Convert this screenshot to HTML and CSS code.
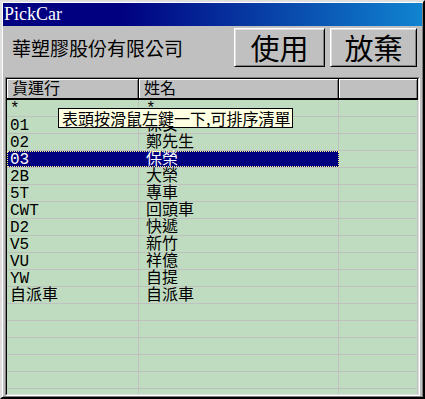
FILE: index.html
```html
<!DOCTYPE html>
<html lang="zh-Hant">
<head>
    <meta charset="UTF-8">
    <title>PickCar</title>
    <link rel="stylesheet" href="styles.css">
</head>
<body>
    <div class="window">
        <div class="titlebar">PickCar</div>
        <div class="toolbar">
            <span class="company">華塑膠股份有限公司</span>
            <div class="buttons">
                <button class="btn btn-use">使用</button>
                <button class="btn btn-cancel">放棄</button>
            </div>
        </div>
        <div class="grid">
            <div class="grid-frame">
                <div class="grid-head">
                    <div class="head-cell">貨運行</div>
                    <div class="head-cell">姓名</div>
                    <div class="head-cell"></div>
                </div>
                <div class="grid-body">
                    <div class="row"><div class="cell">*</div><div class="cell">*</div><div class="cell"></div></div>
                    <div class="row"><div class="cell">01</div><div class="cell">保安</div><div class="cell"></div></div>
                    <div class="row"><div class="cell">02</div><div class="cell">鄭先生</div><div class="cell"></div></div>
                    <div class="row selected"><div class="cell">03</div><div class="cell">保榮</div><div class="cell"></div></div>
                    <div class="row"><div class="cell">2B</div><div class="cell">大榮</div><div class="cell"></div></div>
                    <div class="row"><div class="cell">5T</div><div class="cell">專車</div><div class="cell"></div></div>
                    <div class="row"><div class="cell">CWT</div><div class="cell">回頭車</div><div class="cell"></div></div>
                    <div class="row"><div class="cell">D2</div><div class="cell">快遞</div><div class="cell"></div></div>
                    <div class="row"><div class="cell">V5</div><div class="cell">新竹</div><div class="cell"></div></div>
                    <div class="row"><div class="cell">VU</div><div class="cell">祥億</div><div class="cell"></div></div>
                    <div class="row"><div class="cell">YW</div><div class="cell">自提</div><div class="cell"></div></div>
                    <div class="row"><div class="cell">自派車</div><div class="cell">自派車</div><div class="cell"></div></div>
                    <div class="row"><div class="cell"></div><div class="cell"></div><div class="cell"></div></div>
                    <div class="row"><div class="cell"></div><div class="cell"></div><div class="cell"></div></div>
                    <div class="row"><div class="cell"></div><div class="cell"></div><div class="cell"></div></div>
                    <div class="row"><div class="cell"></div><div class="cell"></div><div class="cell"></div></div>
                    <div class="row"><div class="cell"></div><div class="cell"></div><div class="cell"></div></div>
                    <div class="row"><div class="cell"></div><div class="cell"></div><div class="cell"></div></div>
                </div>
            </div>
        </div>
        <!-- 滑鼠提示 -->
        <div class="tooltip">表頭按滑鼠左鍵一下,可排序清單</div>
    </div>
</body>
</html>
```

FILE: styles.css
```css
html, body {
    margin: 0;
    padding: 0;
}

body {
    width: 425px;
    height: 399px;
    overflow: hidden;
    background-color: #c0c0c0;
}

.window {
    position: relative;
    box-sizing: border-box;
    width: 425px;
    height: 399px;
    padding: 1px;
    border: 2px solid;
    border-color: #dfdfdf #000 #000 #dfdfdf;
    box-shadow: inset 1px 1px #fff, inset -1px -1px #808080;
    background-color: #c0c0c0;
    display: flex;
    flex-direction: column;
    font-family: "Noto Sans CJK TC", sans-serif;
}

.titlebar {
    flex-shrink: 0;
    height: 23px;
    padding-left: 1px;
    color: #fff;
    font-family: "Liberation Serif", "Noto Sans CJK TC", serif;
    font-size: 18px;
    line-height: 23px;
    background: linear-gradient(to right, #000080 28%, #1084d0 100%);
}

.toolbar {
    flex-shrink: 0;
    box-sizing: border-box;
    height: 51px;
    display: flex;
    justify-content: space-between;
    align-items: flex-start;
    padding: 2px 5px 0 9px;
}

.company {
    margin-top: 8px;
    font-size: 19px;
    line-height: 24px;
    color: #000;
}

.buttons {
    display: flex;
    gap: 5px;
}

.btn {
    box-sizing: border-box;
    height: 39px;
    padding: 0;
    background-color: #c0c0c0;
    border: 1px solid;
    border-color: #fff #000 #000 #fff;
    box-shadow: inset 1px 1px #dfdfdf, inset -1px -1px #808080;
    font-family: "Noto Sans CJK TC", sans-serif;
    font-size: 29px;
    line-height: 35px;
    color: #000;
}

.btn-use {
    width: 91px;
}

.btn-cancel {
    width: 87px;
}

.grid {
    flex: 1;
    min-height: 0;
    display: flex;
    margin: 0 2px;
    border: 1px solid;
    border-color: #808080 #fff #fff #808080;
}

.grid-frame {
    flex: 1;
    min-height: 0;
    border: 1px solid;
    border-color: #000 #dfdfdf #dfdfdf #000;
    overflow: hidden;
    background-color: #c0dcc0;
}

.grid-head {
    display: grid;
    grid-template-columns: 132px 200px 1fr;
    height: 21px;
    box-sizing: border-box;
    border-bottom: 2px solid #000;
    background-color: #c0c0c0;
}

.head-cell {
    box-sizing: border-box;
    border-right: 1px solid #000;
    box-shadow: inset 1px 1px #fff, inset -1px 0 #808080;
    padding-left: 5px;
    font-size: 16px;
    line-height: 17px;
    color: #000;
}

.row {
    position: relative;
    display: grid;
    grid-template-columns: 132px 200px 1fr;
    height: 17px;
    box-sizing: border-box;
    border-bottom: 1px solid #c0c0c0;
}

.cell {
    border-right: 1px solid #c0c0c0;
    padding: 2px 0 0 3px;
    font-family: "Liberation Mono", "Noto Sans CJK TC", monospace;
    font-size: 16px;
    line-height: 14px;
    color: #000;
    white-space: nowrap;
}

.cell:nth-child(2) {
    padding-left: 7px;
}

.row.selected .cell:nth-child(1),
.row.selected .cell:nth-child(2) {
    background-color: #000080;
    color: #fff;
    border-right-color: #000080;
}

/* 焦點框 */
.row.selected::after {
    content: "";
    position: absolute;
    left: 0;
    top: 0;
    width: 332px;
    height: 16px;
    box-sizing: border-box;
    border: 1px dotted #ffff80;
    pointer-events: none;
}

.tooltip {
    position: absolute;
    left: 56px;
    top: 106px;
    box-sizing: border-box;
    height: 20px;
    padding: 0 2px 0 3px;
    background-color: #ffffe1;
    border: 1px solid #000;
    font-size: 16px;
    line-height: 18px;
    color: #000;
    white-space: nowrap;
}
```
